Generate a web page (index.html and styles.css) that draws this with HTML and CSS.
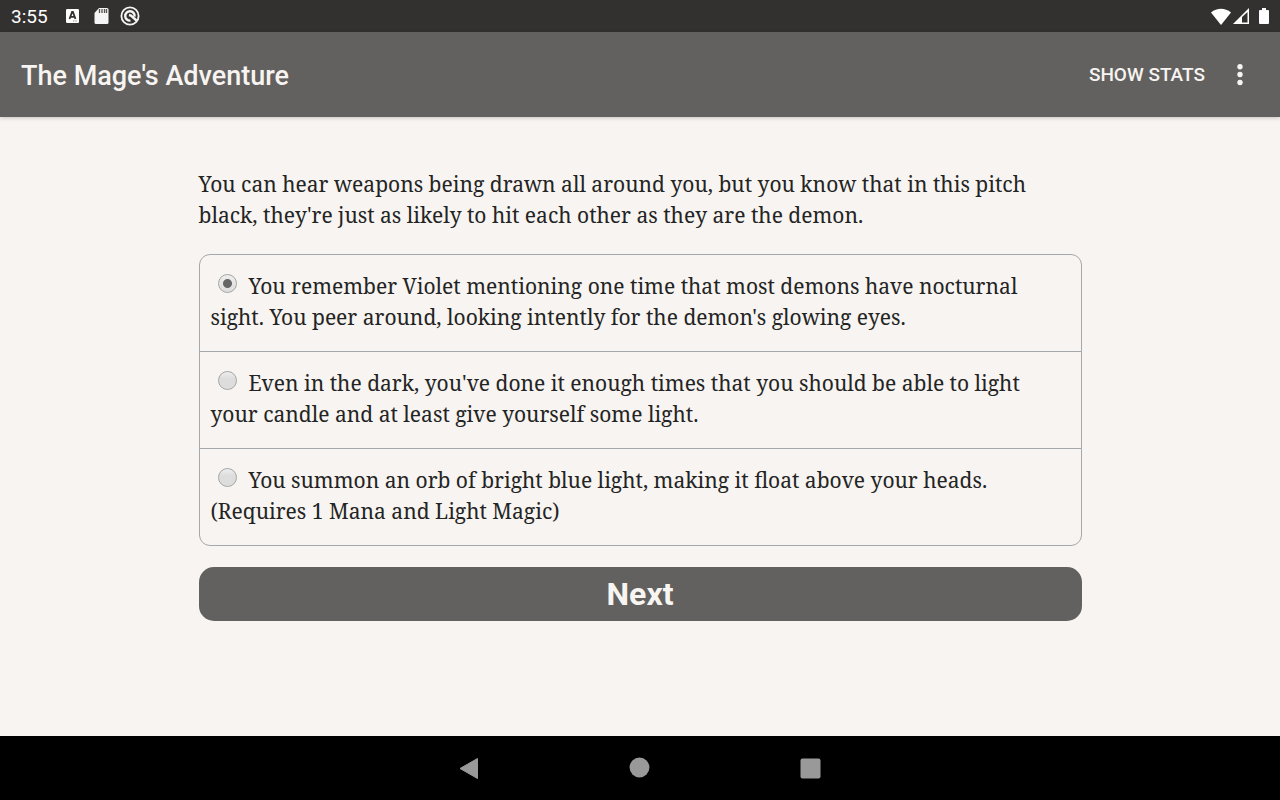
FILE: index.html
```html
<!DOCTYPE html>
<html lang="en">
<head>
  <meta charset="UTF-8">
  <meta name="viewport" content="width=device-width, initial-scale=1.0">
  <link rel="stylesheet" href="styles.css">
  <title>The Mage's Adventure</title>
</head>
<body>
  <div class="status-bar">
    <span class="clock">3:55</span>
    <div class="notifications">
      <svg width="20" height="20" viewBox="0 0 20 20"><rect x="4" y="3" width="13" height="14" rx="1.200" fill="#fff"/><path d="M7.500 13l2.600-7h.8l2.600 7M8.500 10.800h4" fill="none" stroke="#32312f" stroke-width="1.800"/><path d="M11 15h4" stroke="#888" stroke-dasharray="1 .6"/></svg>
      <svg width="20" height="20" viewBox="0 0 20 20"><path d="M8 2h8a1.500 1.500 0 0 1 1.500 1.500v13A1.500 1.500 0 0 1 16 18H5a1.500 1.500 0 0 1-1.500-1.500V7z" fill="#f5f5f5"/><path d="M8.500 3v4M11 3v4M13.500 3v4M15.500 3v4" stroke="#55534f" stroke-width="1.300"/></svg>
      <svg width="20" height="20" viewBox="0 0 20 20" fill="none" stroke="#f5f5f5"><circle cx="10" cy="10" r="8.600" stroke-width="1.800"/><path d="M10.500 14.600A4.700 4.700 0 1 1 14.600 10.500M9 9l2 .5 5.500 5" stroke-width="2.400"/></svg>
    </div>
    <div class="system">
      <svg width="20" height="20" viewBox="0 0 20 20"><path d="M0 6.500C6 1.500 14 1.500 20 6.500L10 19z" fill="#fff"/></svg>
      <svg width="18" height="20" viewBox="0 0 18 20"><path d="M2 18L18 2v16zM11 11v5.500h5.500V6z" fill="#fff" fill-rule="evenodd"/></svg>
      <svg width="10" height="20" viewBox="0 0 10 20"><path d="M3 2h4v2h2a1 1 0 0 1 1 1v12a1 1 0 0 1-1 1H1a1 1 0 0 1-1-1V5a1 1 0 0 1 1-1h2z" fill="#fff"/></svg>
    </div>
  </div>

  <header class="app-bar">
    <h1>The Mage's Adventure</h1>
    <button type="button" class="stats-button">Show Stats</button>
    <button type="button" class="menu-button" aria-label="More options">
      <svg width="6" height="22" viewBox="0 0 6 22" fill="#f7f4f1"><circle cx="3" cy="2.700" r="2.700"/><circle cx="3" cy="10.500" r="2.700"/><circle cx="3" cy="18.500" r="2.700"/></svg>
    </button>
  </header>

  <main class="page">
    <form class="story">
      <p>You can hear weapons being drawn all around you, but you know that in this pitch black, they're just as likely to hit each other as they are the demon.</p>
      <div class="choices">
        <label class="choice"><input type="radio" name="choice" checked>You remember Violet mentioning one time that most demons have nocturnal sight. You peer around, looking intently for the demon's glowing eyes.</label>
        <label class="choice"><input type="radio" name="choice">Even in the dark, you've done it enough times that you should be able to light your candle and at least give yourself some light.</label>
        <label class="choice"><input type="radio" name="choice">You summon an orb of bright blue light, making it float above your heads. (Requires 1 Mana and Light Magic)</label>
      </div>
      <button type="button" class="next-button">Next</button>
    </form>
  </main>

  <nav class="nav-bar">
    <button type="button" aria-label="Back"><svg width="22" height="22" viewBox="0 0 22 22"><path d="M2 11.500L19.500 1.500v20z" fill="#999" stroke="#999" stroke-linejoin="round"/></svg></button>
    <button type="button" aria-label="Home"><svg width="22" height="22" viewBox="0 0 22 22"><circle cx="10.500" cy="10.500" r="9.900" fill="#999"/></svg></button>
    <button type="button" aria-label="Recent apps"><svg width="22" height="22" viewBox="0 0 22 22"><rect x=".5" y="1.500" width="20" height="20" rx="2" fill="#999"/></svg></button>
  </nav>
</body>
</html>
```
FILE: styles.css
```css
* {
  box-sizing: border-box;
}

body {
  margin: 0;
  min-height: 100vh;
  display: flex;
  flex-direction: column;
  background-color: #f7f4f1;
  color: #242424;
  font-family: "Noto Serif", "Droid Serif", "Noto Sans", serif;
}

button {
  border: none;
  background: none;
  padding: 0;
  cursor: pointer;
}

svg {
  display: block;
}

.status-bar {
  display: flex;
  align-items: center;
  height: 32px;
  padding: 0 11px;
  background-color: #32312f;
  color: #fff;
  font-family: Roboto, sans-serif;
}

.clock {
  font-size: 19px;
}

.notifications {
  display: flex;
  gap: 9px;
  margin-left: 14px;
}

.system {
  display: flex;
  margin-left: auto;
}

.system svg:last-child {
  margin-left: 10px;
}

.app-bar {
  display: flex;
  align-items: center;
  height: 85px;
  padding: 0 37px 0 21px;
  background-color: #62615f;
  box-shadow: 0 1px 4px rgba(0, 0, 0, 0.2);
  color: #f7f4f1;
  font-family: Roboto, sans-serif;
}

.app-bar h1 {
  margin: 0;
  padding-top: 2px;
  font-size: 27px;
  font-weight: 500;
}

.stats-button {
  margin-left: auto;
  color: #f7f4f1;
  font-family: inherit;
  font-size: 19px;
  font-weight: 500;
  text-transform: uppercase;
}

.menu-button {
  margin-left: 32px;
}

.page {
  flex: 1;
  padding: 52px 15%;
}

.story {
  max-width: 883px;
  margin: 0 auto;
  font-size: 21px;
  line-height: 31px;
}

.story p {
  margin: 0 0 23px;
}

.choices {
  border: 1px solid #a5a8aa;
  border-radius: 11px;
}

.choice {
  display: block;
  padding: 16px 11px 18px;
}

.choice + .choice {
  border-top: 1px solid #a5a8aa;
}

/* Grey bevelled radio buttons */
.choice input {
  appearance: none;
  width: 19px;
  height: 19px;
  margin: 0 12px 1px 7px;
  border: 1px solid #a5a5a5;
  border-radius: 50%;
  background-image: linear-gradient(#eee, #ddd 40%, #ddd);
}

.choice input:checked {
  background-image: radial-gradient(circle, #666 4px, transparent 5px), linear-gradient(#eee, #ddd);
}

.next-button {
  width: 100%;
  margin-top: 21px;
  height: 54px;
  border-radius: 15px;
  background-color: #62615f;
  color: #f7f4f1;
  font-family: Roboto, sans-serif;
  font-size: 32px;
  font-weight: 700;
}

.nav-bar {
  display: flex;
  justify-content: center;
  align-items: center;
  gap: 149px;
  height: 64px;
  background-color: #000;
}
```
